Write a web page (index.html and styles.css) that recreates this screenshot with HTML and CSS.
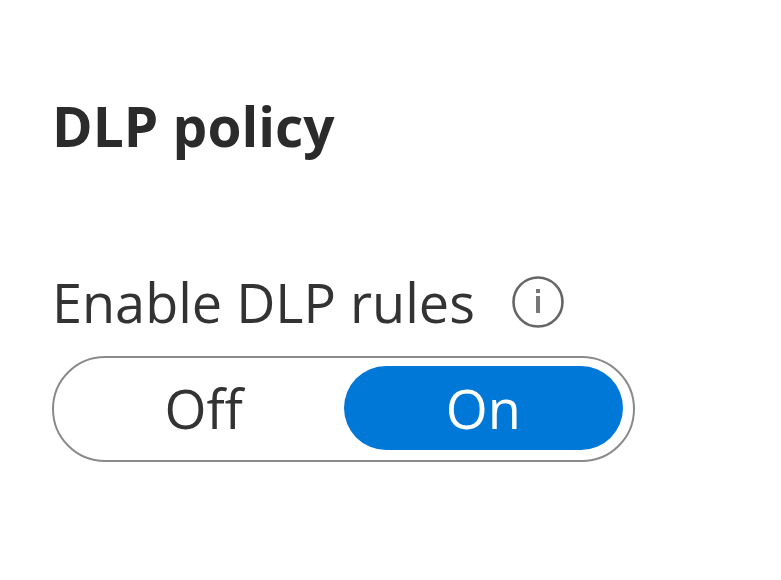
FILE: index.html
```html
<!DOCTYPE html>
<html lang="en">
<head>
    <meta charset="UTF-8">
    <meta name="viewport" content="width=device-width, initial-scale=1.0">
    <title>DLP policy</title>
    <link rel="stylesheet" href="styles.css">
</head>
<body>
    <main>
        <h1>DLP policy</h1>
        <form>
            <fieldset>
                <legend>
                    <span>Enable DLP rules</span>
                    <button type="button" class="info" aria-label="More information">
                        <svg viewBox="0 0 52 52" width="52" height="52" aria-hidden="true">
                            <circle cx="26" cy="26" r="24.5" fill="none" stroke="#666" stroke-width="2.6"/>
                            <rect x="24" y="20" width="4" height="17" fill="#777"/>
                            <rect x="24" y="13" width="4" height="4" fill="#777"/>
                        </svg>
                    </button>
                </legend>
                <div class="toggle">
                    <input type="radio" name="dlp" id="dlp-off">
                    <label for="dlp-off">Off</label>
                    <input type="radio" name="dlp" id="dlp-on" checked>
                    <label for="dlp-on">On</label>
                </div>
            </fieldset>
        </form>
    </main>
</body>
</html>
```

FILE: styles.css
```css
* {
    box-sizing: border-box;
}

body {
    margin: 0;
    background: #fff;
    color: #333;
    font-family: "Open Sans", "Noto Sans", sans-serif;
}

main {
    max-width: 687px;
    padding: 86px 52px;
}

h1 {
    margin: 0 0 106px;
    color: #2b2b2b;
    font-size: 55px;
    line-height: 80px;
}

fieldset {
    margin: 0;
    padding: 0;
    border: 0;
}

legend {
    display: flex;
    align-items: center;
    gap: 37px;
    padding: 0;
    margin-bottom: 24px;
    font-size: 54px;
    line-height: 60px;
    white-space: nowrap;
}

.info {
    display: flex;
    padding: 0;
    border: 0;
    background: none;
    cursor: pointer;
}

.toggle {
    display: flex;
    padding: 8px 10px 10px;
    border: 2px solid #8a8a8a;
    border-radius: 53px;
}

.toggle input {
    position: absolute;
    opacity: 0;
}

.toggle label {
    flex: 1;
    border-radius: 42px;
    font-size: 54px;
    line-height: 84px;
    text-align: center;
    cursor: pointer;
}

.toggle input:checked + label {
    background: #0078d7;
    color: #fff;
}

.toggle input:focus-visible + label {
    outline: 2px solid #333;
}
```
